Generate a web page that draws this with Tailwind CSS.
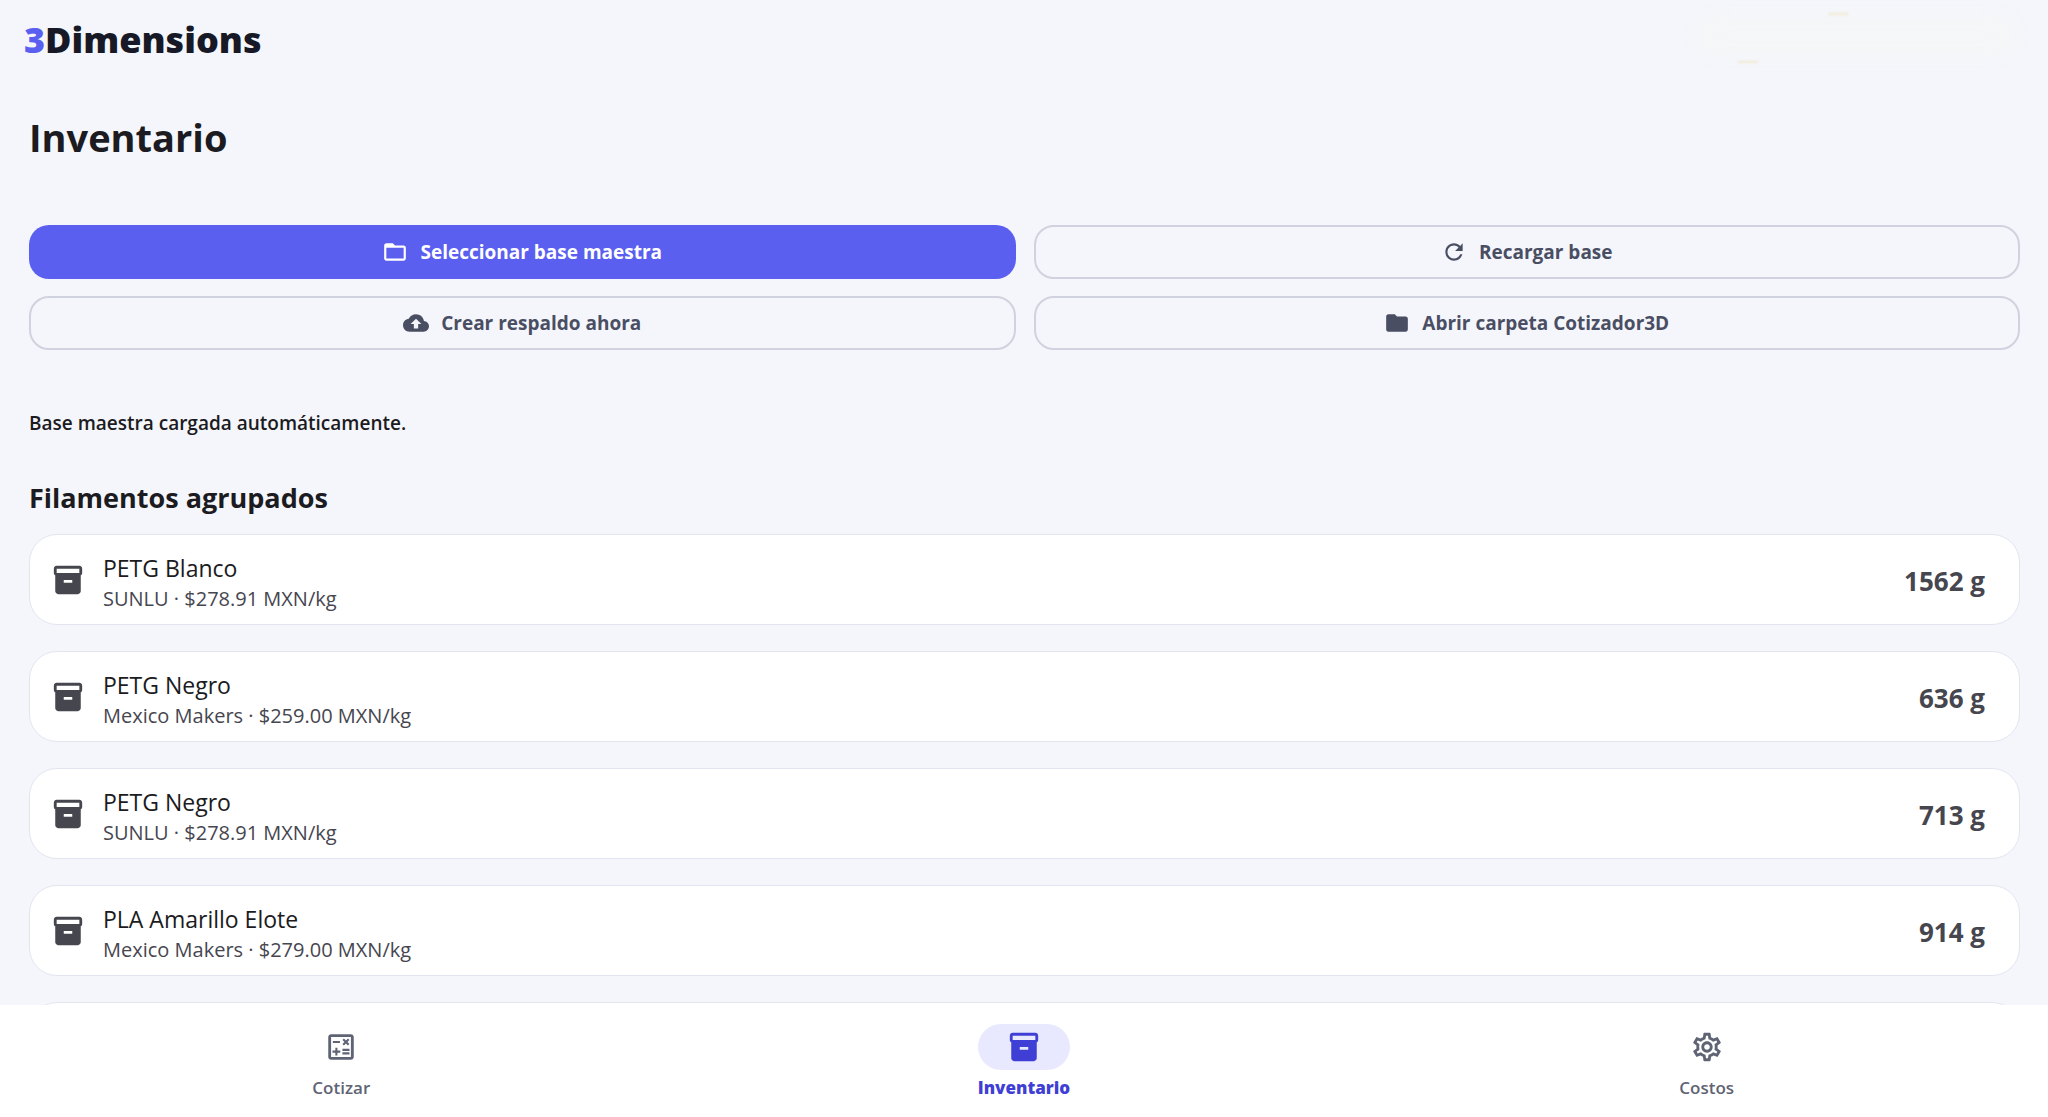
<!DOCTYPE html>
<html lang="es">

<head>
    <meta charset="UTF-8">
    <meta name="viewport" content="width=device-width, initial-scale=1.0">
    <title>3Dimensions - Inventario</title>
    <script src="https://cdn.jsdelivr.net/npm/@tailwindcss/browser@4"></script>
</head>

<body class="h-screen flex flex-col overflow-hidden bg-[#f4f6fb] text-[#1b1b21] font-['Open_Sans','Noto_Sans',sans-serif]">

    <!-- Shared icons -->
    <svg class="hidden">
        <symbol id="icon-box" viewBox="0 0 24 24">
            <path d="M20 2H4c-1 0-2 .9-2 2v3.01c0 .72.43 1.34 1 1.69V20c0 1.1 1.1 2 2 2h14c.9 0 2-.9 2-2V8.7c.57-.35 1-.97 1-1.69V4c0-1.1-1-2-2-2zm-5 12H9v-2h6v2zm5-7H4V4h16v3z" />
        </symbol>
    </svg>

    <header class="flex justify-between items-start h-20 shrink-0 pl-6 pr-8 pt-4">
        <div class="text-[36px] leading-[48px] font-extrabold text-[#171a26]"><span class="text-[#5b5fef]">3</span>Dimensions</div>
        <div class="relative w-80 h-10">
            <div class="h-full rounded-full bg-[#f5f6f7] blur-sm"></div>
            <span class="absolute left-[132px] -top-[3px] w-5 h-[2px] rounded-full bg-[#f3e9d2] blur-[1px]"></span>
            <span class="absolute left-[42px] top-[45px] w-5 h-[2px] rounded-full bg-[#f3e9d2] blur-[1px]"></span>
        </div>
    </header>

    <main class="flex-1 min-h-0 overflow-hidden pl-[29px] pr-7 pt-8">
        <h1 class="text-[38px] leading-[50px] font-bold">Inventario</h1>

        <div class="grid grid-cols-2 gap-x-[18px] gap-y-[17px] mt-[63px] text-[19px] leading-[28px] font-bold text-[#4a4e63]">
            <button type="button" class="flex items-center justify-center gap-3 h-[54px] rounded-[20px] bg-[#5b5fef] text-white">
                <svg class="size-[26px]" viewBox="0 0 24 24" fill="currentColor">
                    <path d="M20 6h-8l-2-2H4c-1.1 0-1.99.9-1.99 2L2 18c0 1.1.9 2 2 2h16c1.1 0 2-.9 2-2V8c0-1.1-.9-2-2-2zm0 12H4V8h16v10z" />
                </svg>
                Seleccionar base maestra
            </button>
            <button type="button" class="flex items-center justify-center gap-3 h-[54px] rounded-[20px] border-2 border-[#d0d3df]">
                <svg class="size-[26px]" viewBox="0 0 24 24" fill="currentColor">
                    <path d="M17.65 6.35C16.2 4.9 14.21 4 12 4c-4.42 0-7.99 3.58-7.99 8s3.57 8 7.99 8c3.73 0 6.84-2.55 7.73-6h-2.08c-.82 2.33-3.04 4-5.65 4-3.31 0-6-2.69-6-6s2.69-6 6-6c1.66 0 3.14.69 4.22 1.78L13 11h7V4l-2.35 2.35z" />
                </svg>
                Recargar base
            </button>
            <button type="button" class="flex items-center justify-center gap-3 h-[54px] rounded-[20px] border-2 border-[#d0d3df]">
                <svg class="size-[26px]" viewBox="0 0 24 24" fill="currentColor">
                    <path d="M19.35 10.04C18.67 6.59 15.64 4 12 4 9.11 4 6.6 5.64 5.35 8.04 2.34 8.36 0 10.91 0 14c0 3.31 2.69 6 6 6h13c2.76 0 5-2.24 5-5 0-2.64-2.05-4.78-4.65-4.96zM14 13v4h-4v-4H7l5-5 5 5h-3z" />
                </svg>
                Crear respaldo ahora
            </button>
            <button type="button" class="flex items-center justify-center gap-3 h-[54px] rounded-[20px] border-2 border-[#d0d3df]">
                <svg class="size-[26px]" viewBox="0 0 24 24" fill="currentColor">
                    <path d="M10 4H4c-1.1 0-1.99.9-1.99 2L2 18c0 1.1.9 2 2 2h16c1.1 0 2-.9 2-2V8c0-1.1-.9-2-2-2h-8l-2-2z" />
                </svg>
                Abrir carpeta Cotizador3D
            </button>
        </div>

        <p class="mt-[58px] text-[19px] leading-[30px] font-semibold">Base maestra cargada automáticamente.</p>

        <h2 class="mt-[42px] text-[27px] leading-[36px] font-bold">Filamentos agrupados</h2>
        <ul id="filament-list" class="flex flex-col gap-[26px] mt-[18px]"></ul>
    </main>

    <nav class="relative grid grid-cols-3 h-28 shrink-0 pt-[19px] bg-white text-[17px] leading-[24px] text-[#5f6475]">
        <a href="#" class="flex flex-col items-center gap-[6px] font-semibold">
            <span class="flex items-center justify-center w-[92px] h-[46px]">
                <svg class="size-[34px]" viewBox="0 0 24 24" fill="currentColor">
                    <path d="M19 3H5c-1.1 0-2 .9-2 2v14c0 1.1.9 2 2 2h14c1.1 0 2-.9 2-2V5c0-1.1-.9-2-2-2zm0 16H5V5h14v14z" />
                    <path d="M6.25 7.72h5v1.5h-5zM13 15.75h5v1.5h-5zM13 13.25h5v1.5h-5zM8 18h1.5v-2h2v-1.5h-2v-2H8v2H6V16h2zM14.09 10.95l1.41-1.41 1.41 1.41 1.06-1.06-1.41-1.42 1.41-1.41L16.91 6 15.5 7.41 14.09 6l-1.06 1.06 1.41 1.41-1.41 1.42z" />
                </svg>
            </span>
            Cotizar
        </a>
        <a href="#" aria-current="page" class="flex flex-col items-center gap-[6px] font-extrabold text-[#3f3fd6]">
            <span class="flex items-center justify-center w-[92px] h-[46px] rounded-full bg-[#e8e8ff]">
                <svg class="size-[34px]" fill="currentColor"><use href="#icon-box" /></svg>
            </span>
            Inventario
        </a>
        <a href="#" class="flex flex-col items-center gap-[6px] font-semibold">
            <span class="flex items-center justify-center w-[92px] h-[46px]">
                <svg class="size-[34px]" viewBox="0 0 24 24" fill="currentColor">
                    <path d="M19.43 12.98c.04-.32.07-.64.07-.98 0-.34-.03-.66-.07-.98l2.11-1.65c.19-.15.24-.42.12-.64l-2-3.46c-.09-.16-.26-.25-.44-.25-.06 0-.12.01-.17.03l-2.49 1c-.52-.4-1.08-.73-1.69-.98l-.38-2.65C14.46 2.18 14.25 2 14 2h-4c-.25 0-.46.18-.49.42l-.38 2.65c-.61.25-1.17.59-1.69.98l-2.49-1c-.06-.02-.12-.03-.18-.03-.17 0-.34.09-.43.25l-2 3.46c-.13.22-.07.49.12.64l2.11 1.65c-.04.32-.07.65-.07.98 0 .33.03.66.07.98l-2.11 1.65c-.19.15-.24.42-.12.64l2 3.46c.09.16.26.25.44.25.06 0 .12-.01.17-.03l2.49-1c.52.4 1.08.73 1.69.98l.38 2.65c.03.24.24.42.49.42h4c.25 0 .46-.18.49-.42l.38-2.65c.61-.25 1.17-.59 1.69-.98l2.49 1c.06.02.12.03.18.03.17 0 .34-.09.43-.25l2-3.46c.12-.22.07-.49-.12-.64l-2.11-1.65zm-1.98-1.71c.04.31.05.52.05.73 0 .21-.02.43-.05.73l-.14 1.13.89.7 1.08.84-.7 1.21-1.27-.51-1.04-.42-.9.68c-.43.32-.84.56-1.25.73l-1.06.43-.16 1.13-.2 1.35h-1.4l-.19-1.35-.16-1.13-1.06-.43c-.43-.18-.83-.41-1.23-.71l-.91-.7-1.06.43-1.27.51-.7-1.21 1.08-.84.89-.7-.14-1.13c-.03-.31-.05-.54-.05-.74s.02-.43.05-.73l.14-1.13-.89-.7-1.08-.84.7-1.21 1.27.51 1.04.42.9-.68c.43-.32.84-.56 1.25-.73l1.06-.43.16-1.13.2-1.35h1.39l.19 1.35.16 1.13 1.06.43c.43.18.83.41 1.23.71l.91.7 1.06-.43 1.27-.51.7 1.21-1.07.85-.89.7.14 1.13zM12 8c-2.21 0-4 1.79-4 4s1.79 4 4 4 4-1.79 4-4-1.79-4-4-4zm0 6c-1.1 0-2-.9-2-2s.9-2 2-2 2 .9 2 2-.9 2-2 2z" />
                </svg>
            </span>
            Costos
        </a>
    </nav>

    <script>
        const filaments = [
            { name: 'PETG Blanco', brand: 'SUNLU', price: 278.91, grams: 1562 },
            { name: 'PETG Negro', brand: 'Mexico Makers', price: 259.00, grams: 636 },
            { name: 'PETG Negro', brand: 'SUNLU', price: 278.91, grams: 713 },
            { name: 'PLA Amarillo Elote', brand: 'Mexico Makers', price: 279.00, grams: 914 },
        ];

        function displayFilaments() {
            const list = document.getElementById('filament-list');
            filaments.forEach(filament => {
                const item = document.createElement('li');
                item.className = 'flex items-center h-[91px] shrink-0 pl-[21px] pr-[34px] rounded-[28px] border border-[#e2e5f0] bg-white';
                item.innerHTML = `
                    <svg class="size-[34px] shrink-0 text-[#46464f]" fill="currentColor"><use href="#icon-box" /></svg>
                    <div class="flex-1 pl-[18px] pt-[7px]">
                        <p class="text-[23px] leading-[32px]">${filament.name}</p>
                        <p class="text-[20px] leading-[30px] text-[#46464f]">${filament.brand} · $${filament.price.toFixed(2)} MXN/kg</p>
                    </div>
                    <span class="pt-[2px] text-[26px] leading-[36px] font-bold text-[#46464f]">${filament.grams} g</span>
                `;
                list.appendChild(item);
            });

            // Empty card that closes the list
            const last = document.createElement('li');
            last.className = 'h-[91px] shrink-0 rounded-[28px] border border-[#e2e5f0] bg-white';
            list.appendChild(last);
        }

        displayFilaments();
    </script>
</body>

</html>
